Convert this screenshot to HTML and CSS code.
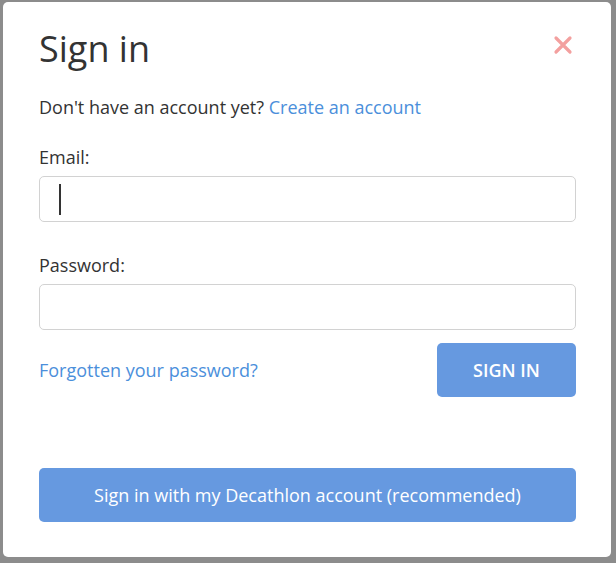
FILE: index.html
```html
<!DOCTYPE html>
<html>
<head>
<meta charset="utf-8">
<link rel="stylesheet" href="styles.css">
</head>
<body>
<div class="modal">
  <div class="header">
    <h1 class="title">Sign in</h1>
    <button class="close" aria-label="Close">
      <svg width="20" height="20" viewBox="0 0 20 20"><path d="M3 3 L17 17 M17 3 L3 17" stroke="#f3a09f" stroke-width="3.2" stroke-linecap="round"/></svg>
    </button>
  </div>
  <p class="lead">Don't have an account yet? <a href="#" class="link">Create an account</a></p>
  <label class="label">Email:</label>
  <div class="input"><span class="caret"></span></div>
  <label class="label pw">Password:</label>
  <div class="input"></div>
  <div class="actions">
    <a href="#" class="link">Forgotten your password?</a>
    <button class="btn btn-small">SIGN IN</button>
  </div>
  <button class="btn btn-wide">Sign in with my Decathlon account (recommended)</button>
</div>
</body>
</html>
```
FILE: styles.css
```css
html, body {
  margin: 0;
  height: 100%;
}
body {
  background: #8c8c8c;
  padding: 2px 5px 6px 3px;
  box-sizing: border-box;
  font-family: "Open Sans", "Noto Sans", sans-serif;
  color: #333;
}
.modal {
  background: #fff;
  border-radius: 5px;
  height: 100%;
  box-sizing: border-box;
  padding: 24px 35px 0 36px;
  display: flex;
  flex-direction: column;
}
.header {
  display: flex;
  justify-content: space-between;
  align-items: flex-start;
}
.title {
  margin: 0;
  font-weight: 400;
  font-size: 36px;
  line-height: 46px;
  color: #333;
}
.close {
  border: 0;
  background: none;
  padding: 0;
  margin: 9px 3px 0 0;
  width: 20px;
  height: 20px;
  display: flex;
}
.lead {
  margin: 23px 0 0;
  font-size: 18px;
  line-height: 24px;
}
.link {
  color: #4b8fdb;
  text-decoration: none;
  font-size: 18px;
}
.label {
  display: block;
  font-size: 18px;
  line-height: 24px;
  margin-top: 26px;
  margin-bottom: 7px;
}
.label.pw {
  margin-top: 31px;
}
.input {
  height: 46px;
  border: 1px solid #d2d2d2;
  border-radius: 5px;
  box-sizing: border-box;
  display: flex;
  align-items: center;
  padding-left: 19px;
}
.caret {
  width: 1.5px;
  height: 31px;
  background: #333;
}
.actions {
  display: flex;
  justify-content: space-between;
  align-items: center;
  margin-top: 13px;
}
.btn {
  border: 0;
  border-radius: 5px;
  background: #6699e0;
  color: #fff;
  font-family: "Open Sans", "Noto Sans", sans-serif;
  font-size: 18px;
  height: 54px;
  cursor: pointer;
}
.btn-small {
  width: 139px;
  font-weight: 600;
}
.btn-wide {
  margin-top: 71px;
  width: 100%;
}
```
